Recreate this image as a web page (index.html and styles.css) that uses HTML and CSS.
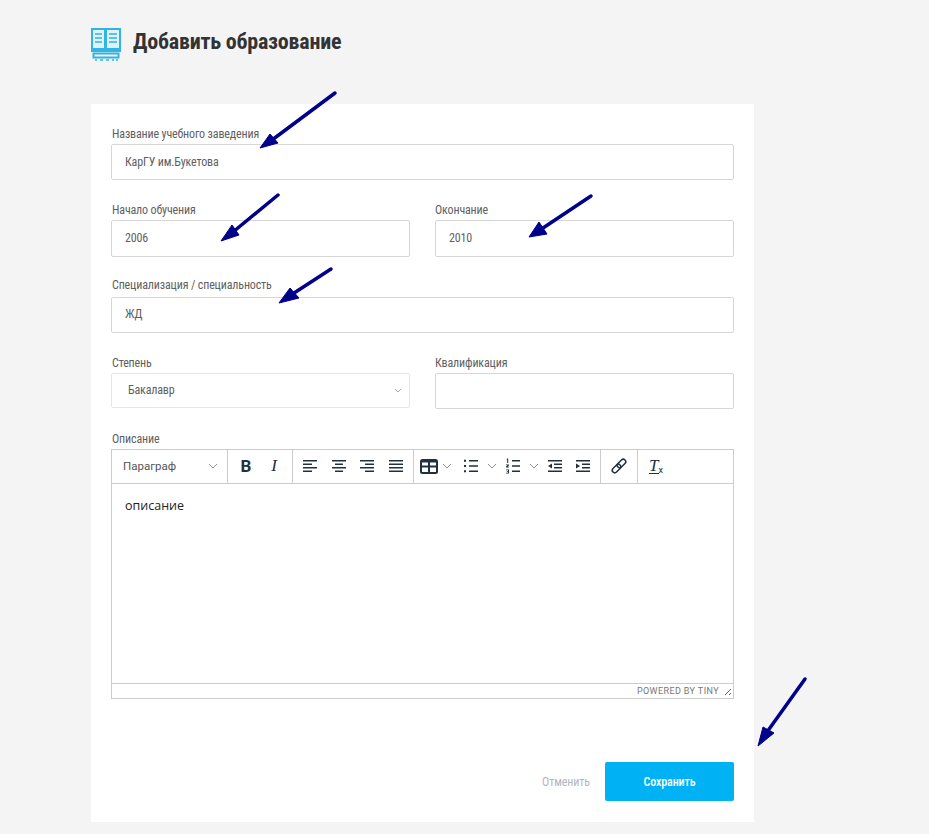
FILE: index.html
```html
<!DOCTYPE html>
<html lang="ru">
<head>
  <meta charset="UTF-8" />
  <meta name="viewport" content="width=device-width, initial-scale=1.0"/>
  <title>Добавить образование</title>
  <link rel="stylesheet" href="styles.css">
</head>
<body>
  <div class="page">
    <div class="page-head">
      <svg class="head-icon" width="30" height="33" viewBox="0 0 30 33" fill="none" stroke="#2fb4e4">
        <rect x="1" y="1" width="13" height="20" fill="#dff2fa" stroke-width="2"/>
        <rect x="15" y="1" width="14" height="20" fill="#dff2fa" stroke-width="2"/>
        <path d="M4 6h7M4 10h7M4 14h7M18 6h8M18 10h8M18 14h8" stroke-width="1.600"/>
        <path d="M0 23h30" stroke-width="2"/>
        <rect x="2.500" y="25.500" width="25" height="4" stroke-width="2"/>
        <path d="M4 32h2M9 32h3M15 32h3M21 32h2M25 32h2" stroke-width="1.600"/>
      </svg>
      <h1>Добавить образование</h1>
    </div>

    <div class="card">
      <div class="field">
        <label for="school">Название учебного заведения</label>
        <input type="text" id="school" value="КарГУ им.Букетова" />
      </div>

      <div class="row row-dates">
        <div class="field">
          <label for="start">Начало обучения</label>
          <input class="tall" type="text" id="start" value="2006" />
        </div>
        <div class="field">
          <label for="end">Окончание</label>
          <input class="tall" type="text" id="end" value="2010" />
        </div>
      </div>

      <div class="field field-spec">
        <label for="spec">Специализация / специальность</label>
        <input class="raised" type="text" id="spec" value="ЖД" />
      </div>

      <div class="row">
        <div class="field">
          <label for="degree">Степень</label>
          <div class="select-wrap">
            <select id="degree">
              <option>Бакалавр</option>
              <option>Магистр</option>
            </select>
            <svg class="select-caret" width="8" height="5" viewBox="0 0 8 5" fill="none" stroke="#a9adb3"><path d="M1 1l3 3 3-3"/></svg>
          </div>
        </div>
        <div class="field">
          <label for="qual">Квалификация</label>
          <input type="text" id="qual" />
        </div>
      </div>

      <div class="field">
        <label>Описание</label>
        <div class="editor">
          <div class="toolbar">
            <div class="tool-group group-format">
              <span class="format-name">Параграф</span>
              <svg class="caret" width="10" height="6" viewBox="0 0 10 6" fill="none" stroke="#8b929a"><path d="M1 1l4 4 4-4"/></svg>
            </div>
            <div class="tool-group">
              <span class="tool tool-bold">B</span>
              <span class="tool tool-italic">I</span>
            </div>
            <div class="tool-group group-align">
              <span class="tool"><svg width="24" height="24" viewBox="0 0 24 24"><path d="M5 6h14v1.500H5zM5 9.500h9V11H5zM5 13h14v1.500H5zM5 16.500h9V18H5z"/></svg></span>
              <span class="tool"><svg width="24" height="24" viewBox="0 0 24 24"><path d="M5 6h14v1.500H5zM8 9.500h8V11H8zM5 13h14v1.500H5zM8 16.500h8V18H8z"/></svg></span>
              <span class="tool"><svg width="24" height="24" viewBox="0 0 24 24"><path d="M5 6h14v1.500H5zM10 9.500h9V11h-9zM5 13h14v1.500H5zM10 16.500h9V18h-9z"/></svg></span>
              <span class="tool"><svg width="24" height="24" viewBox="0 0 24 24"><path d="M5 6h14v1.500H5zM5 9.500h14V11H5zM5 13h14v1.500H5zM5 16.500h14V18H5z"/></svg></span>
            </div>
            <div class="tool-group group-lists">
              <span class="tool"><svg width="24" height="24" viewBox="0 0 24 24"><path fill-rule="evenodd" d="M5.500 5h13A2.500 2.500 0 0 1 21 7.500v10a2.500 2.500 0 0 1-2.500 2.500h-13A2.500 2.500 0 0 1 3 17.500v-10A2.500 2.500 0 0 1 5.500 5zM5 8.500v3h6v-3zm8 0v3h6v-3zm-8 5V18h6v-4.500zm8 0V18h6v-4.500z"/></svg></span>
              <svg class="caret caret-narrow" width="10" height="6" viewBox="0 0 10 6" fill="none" stroke="#8b929a"><path d="M1 1l4 4 4-4"/></svg>
              <span class="tool tool-bullets"><svg width="24" height="24" viewBox="0 0 24 24"><path d="M10 6h9v1.500h-9zM10 11.300h9v1.500h-9zM10 16.500h9V18h-9zM5 5.800h2v2H5zM5 11h2v2H5zM5 16.200h2v2H5z"/></svg></span>
              <svg class="caret caret-wide" width="10" height="6" viewBox="0 0 10 6" fill="none" stroke="#8b929a"><path d="M1 1l4 4 4-4"/></svg>
              <span class="tool"><svg width="24" height="24" viewBox="0 0 24 24"><path d="M11 6h8v1.500h-8zM11 11.300h8v1.500h-8zM11 16.500h8V18h-8zM6.200 4.500h1V9h-1V5.500H5.300zM5 10.500h3v1l-1.500 1.300H8v.7H5v-1l1.500-1.300H5zM5 15.500h3v4H5v-.7h2v-1H5.800v-.7H7v-.9H5z"/></svg></span>
              <svg class="caret caret-wide" width="10" height="6" viewBox="0 0 10 6" fill="none" stroke="#8b929a"><path d="M1 1l4 4 4-4"/></svg>
              <span class="tool"><svg width="24" height="24" viewBox="0 0 24 24"><path d="M5 6h14v1.500H5zM11 9.500h8V11h-8zM11 13h8v1.500h-8zM5 16.500h14V18H5zM9 9.500v5L5 12z"/></svg></span>
              <span class="tool"><svg width="24" height="24" viewBox="0 0 24 24"><path d="M5 6h14v1.500H5zM11 9.500h8V11h-8zM11 13h8v1.500h-8zM5 16.500h14V18H5zM5 9.500v5L9 12z"/></svg></span>
            </div>
            <div class="tool-group">
              <span class="tool"><svg class="icon-link" width="24" height="24" viewBox="0 0 24 24"><rect x="3.500" y="9.500" width="10" height="5" rx="2.500" transform="rotate(-45 12 12)"/><rect x="10.500" y="9.500" width="10" height="5" rx="2.500" transform="rotate(-45 12 12)"/></svg></span>
            </div>
            <div class="tool-group group-last">
              <span class="tool tool-clear"><span class="clear-t">T</span><span class="clear-x">x</span></span>
            </div>
          </div>
          <div class="editor-body">описание</div>
          <div class="statusbar">
            <span class="powered">POWERED BY TINY</span>
            <svg class="resize" width="10" height="10" viewBox="0 0 10 10" fill="none" stroke="#5c6670"><path d="M2 8l6-6M6 8l2-2"/></svg>
          </div>
        </div>
      </div>

      <div class="actions">
        <span class="btn-cancel">Отменить</span>
        <button class="btn-save">Сохранить</button>
      </div>
    </div>

    <!-- annotation arrows drawn over the page -->
    <svg class="arrows" width="929" height="834" viewBox="0 0 929 834" fill="#00008b" stroke="#00008b">
      <path d="M335 93L272 140" stroke-width="3.500" stroke-linecap="round"/>
      <path d="M260 148L270 134L278 143z" stroke-width="1"/>
      <path d="M278 195L233 232" stroke-width="3.500" stroke-linecap="round"/>
      <path d="M221 241L232 225L239 235z" stroke-width="1"/>
      <path d="M591 196L540 230" stroke-width="3.500" stroke-linecap="round"/>
      <path d="M529 237L539 222L547 234z" stroke-width="1"/>
      <path d="M331 269L291 295" stroke-width="3.500" stroke-linecap="round"/>
      <path d="M279 303L290 288L299 298z" stroke-width="1"/>
      <path d="M805 679L767 732" stroke-width="3.500" stroke-linecap="round"/>
      <path d="M758 746L763 727L774 733z" stroke-width="1"/>
    </svg>
  </div>
</body>
</html>
```

FILE: styles.css
```css
* {
  box-sizing: border-box;
}
body {
  margin: 0;
  background-color: #f4f4f4;
  font-family: Roboto, "Liberation Sans", sans-serif;
  color: #555;
}
.page {
  position: relative;
  height: 834px;
  padding: 28px 0 0 91px;
  overflow: hidden;
}
.page-head {
  display: flex;
  align-items: center;
  gap: 12px;
  height: 33px;
  margin-bottom: 43px;
}
h1 {
  margin: 0 0 7px;
  font-size: 22px;
  font-weight: 700;
  font-stretch: condensed;
  letter-spacing: -0.2px;
  color: #333;
}
.card {
  width: 663px;
  height: 718px;
  padding: 22px 20px 21px;
  background-color: #fff;
}
.field {
  display: block;
  margin-bottom: 22px;
}
.row-dates .field {
  margin-bottom: 20px;
}
.field-spec label {
  margin-bottom: 4px;
}
label {
  display: block;
  height: 16px;
  margin-bottom: 2px;
  padding-left: 1px;
  font-size: 12px;
  line-height: 16px;
  font-stretch: condensed;
  letter-spacing: -0.15px;
  color: #5f5f5f;
}
.field + .field label {
  padding-left: 0;
}
input, select {
  display: block;
  width: 100%;
  height: 36px;
  padding: 0 13px;
  border: 1px solid #d6d6d6;
  border-radius: 2px;
  background-color: #fff;
  font-family: inherit;
  font-size: 12px;
  font-stretch: condensed;
  letter-spacing: -0.15px;
  color: #5f5f5f;
}
input.tall {
  height: 37px;
  padding-bottom: 2px;
}
input.raised {
  padding-bottom: 2px;
}
.row {
  display: grid;
  grid-template-columns: 299px 299px;
  gap: 25px;
}
.select-wrap {
  position: relative;
}
select {
  height: 35px;
  padding-left: 16px;
  padding-bottom: 2px;
  border-color: #e6e6e6;
  appearance: none;
}
.select-caret {
  position: absolute;
  top: 15px;
  right: 8px;
}
.editor {
  display: flex;
  flex-direction: column;
  width: 623px;
  height: 250px;
  border: 1px solid #ccc;
}
.toolbar {
  display: flex;
  height: 34px;
  border-bottom: 1px solid #ccc;
}
.tool-group {
  display: flex;
  align-items: center;
  padding: 0 4px 1px;
  border-right: 1px solid #ccc;
}
.group-format {
  justify-content: space-between;
  width: 116px;
  padding: 0 9px 1px 11px;
}
.format-name {
  font-size: 11.500px;
  color: #555;
}
.group-align {
  width: 121px;
  padding: 0 3px 1px;
}
.group-align .tool {
  width: 28.500px;
}
.group-lists {
  width: 187px;
  padding: 0 3px 1px 1px;
}
.group-last {
  border-right: 0;
}
.tool {
  display: flex;
  align-items: center;
  justify-content: center;
  width: 28px;
  height: 28px;
  color: #222f3e;
}
.tool svg {
  fill: #222f3e;
}
.tool svg.icon-link {
  fill: none;
  stroke: #222f3e;
  stroke-width: 1.500;
}
.tool-bold {
  font-size: 17px;
  font-weight: 700;
}
.tool-italic {
  font-family: "Liberation Serif", serif;
  font-size: 17px;
  font-style: italic;
}
.caret-narrow {
  margin: 0 5px 0 -1px;
}
.caret-wide {
  margin: 0 2px;
}
.tool-clear {
  font-family: "Liberation Serif", serif;
}
.clear-t {
  font-size: 17px;
  font-style: italic;
  border-bottom: 1.500px solid #222f3e;
  line-height: 15px;
}
.clear-x {
  margin-top: 8px;
  font-family: Roboto, sans-serif;
  font-size: 9px;
}
.editor-body {
  flex: 1;
  padding: 12px 13px;
  font-family: "Open Sans", sans-serif;
  font-size: 12.500px;
  line-height: 20px;
  color: #222;
}
.statusbar {
  display: flex;
  align-items: center;
  justify-content: flex-end;
  height: 15px;
  border-top: 1px solid #ccc;
}
.powered {
  margin-right: 4px;
  font-size: 9px;
  letter-spacing: 0.4px;
  color: #777;
}
.resize {
  margin-top: 2px;
}
.actions {
  display: flex;
  align-items: center;
  justify-content: flex-end;
  gap: 15px;
  margin-top: 63px;
}
.btn-cancel {
  font-size: 12px;
  font-stretch: condensed;
  letter-spacing: -0.1px;
  color: #b0b7c0;
}
.btn-save {
  width: 129px;
  height: 39px;
  border: 0;
  border-radius: 2px;
  background-color: #00b2f4;
  color: #fff;
  font-family: inherit;
  font-size: 12px;
  font-weight: 500;
  font-stretch: condensed;
  letter-spacing: -0.1px;
}
.arrows {
  position: absolute;
  top: 0;
  left: 0;
  pointer-events: none;
}
```
